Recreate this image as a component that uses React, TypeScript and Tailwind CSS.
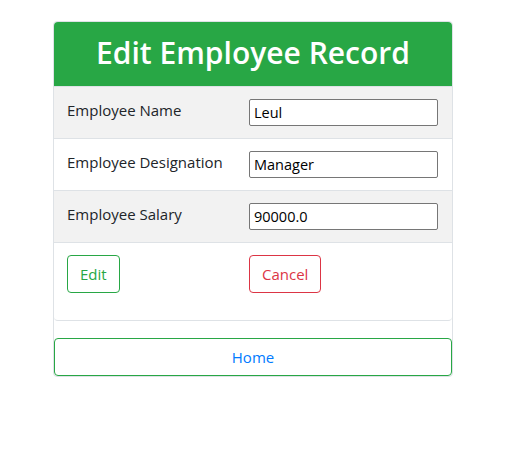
export default function App() {
  const rows = [
    { label: 'Employee Name', value: 'Leul' },
    { label: 'Employee Designation', value: 'Manager' },
    { label: 'Employee Salary', value: '90000.0' },
  ];

  return (
    <div className="w-[515px] h-[455px] bg-white font-['Open_Sans',sans-serif] text-[#212529]">
      <div className="ml-[53px] mt-[21px] w-[400px] border border-[#dee2e6] rounded">
        {/* Card */}
        <div className="border-b border-[#dee2e6] rounded-b">
          <div className="h-[64px] bg-[#28a745] rounded-t flex items-center justify-center">
            <h1 className="text-white text-[30px] font-semibold leading-none -mt-[2px]">Edit Employee Record</h1>
          </div>
          {rows.map((row, i) => (
            <div
              key={row.label}
              className={`flex items-start h-[52px] border-t border-[#dee2e6] ${i % 2 === 0 ? 'bg-[#f2f2f2]' : 'bg-white'}`}
            >
              <div className="w-[195px] pl-[13px] pt-[11px] text-[15px] leading-6">{row.label}</div>
              <div className="pt-[12px]">
                <input
                  readOnly
                  value={row.value}
                  className="w-[189px] h-[27px] border border-[#767676] rounded-[2px] bg-white px-[4px] text-[14.5px] text-black outline-none"
                />
              </div>
            </div>
          ))}
          <div className="flex items-start h-[78px] border-t border-[#dee2e6]">
            <div className="w-[195px] pl-[13px] pt-[12px]">
              <button className="h-[38px] px-[12px] border border-[#28a745] rounded text-[#28a745] text-[15px]">Edit</button>
            </div>
            <div className="pt-[12px]">
              <button className="h-[38px] px-[12px] border border-[#dc3545] rounded text-[#dc3545] text-[15px]">Cancel</button>
            </div>
          </div>
        </div>
        <div className="h-[17px]" />
        <button className="w-full h-[38px] border border-[#28a745] rounded text-[#007bff] text-[15px]">Home</button>
      </div>
    </div>
  );
}
